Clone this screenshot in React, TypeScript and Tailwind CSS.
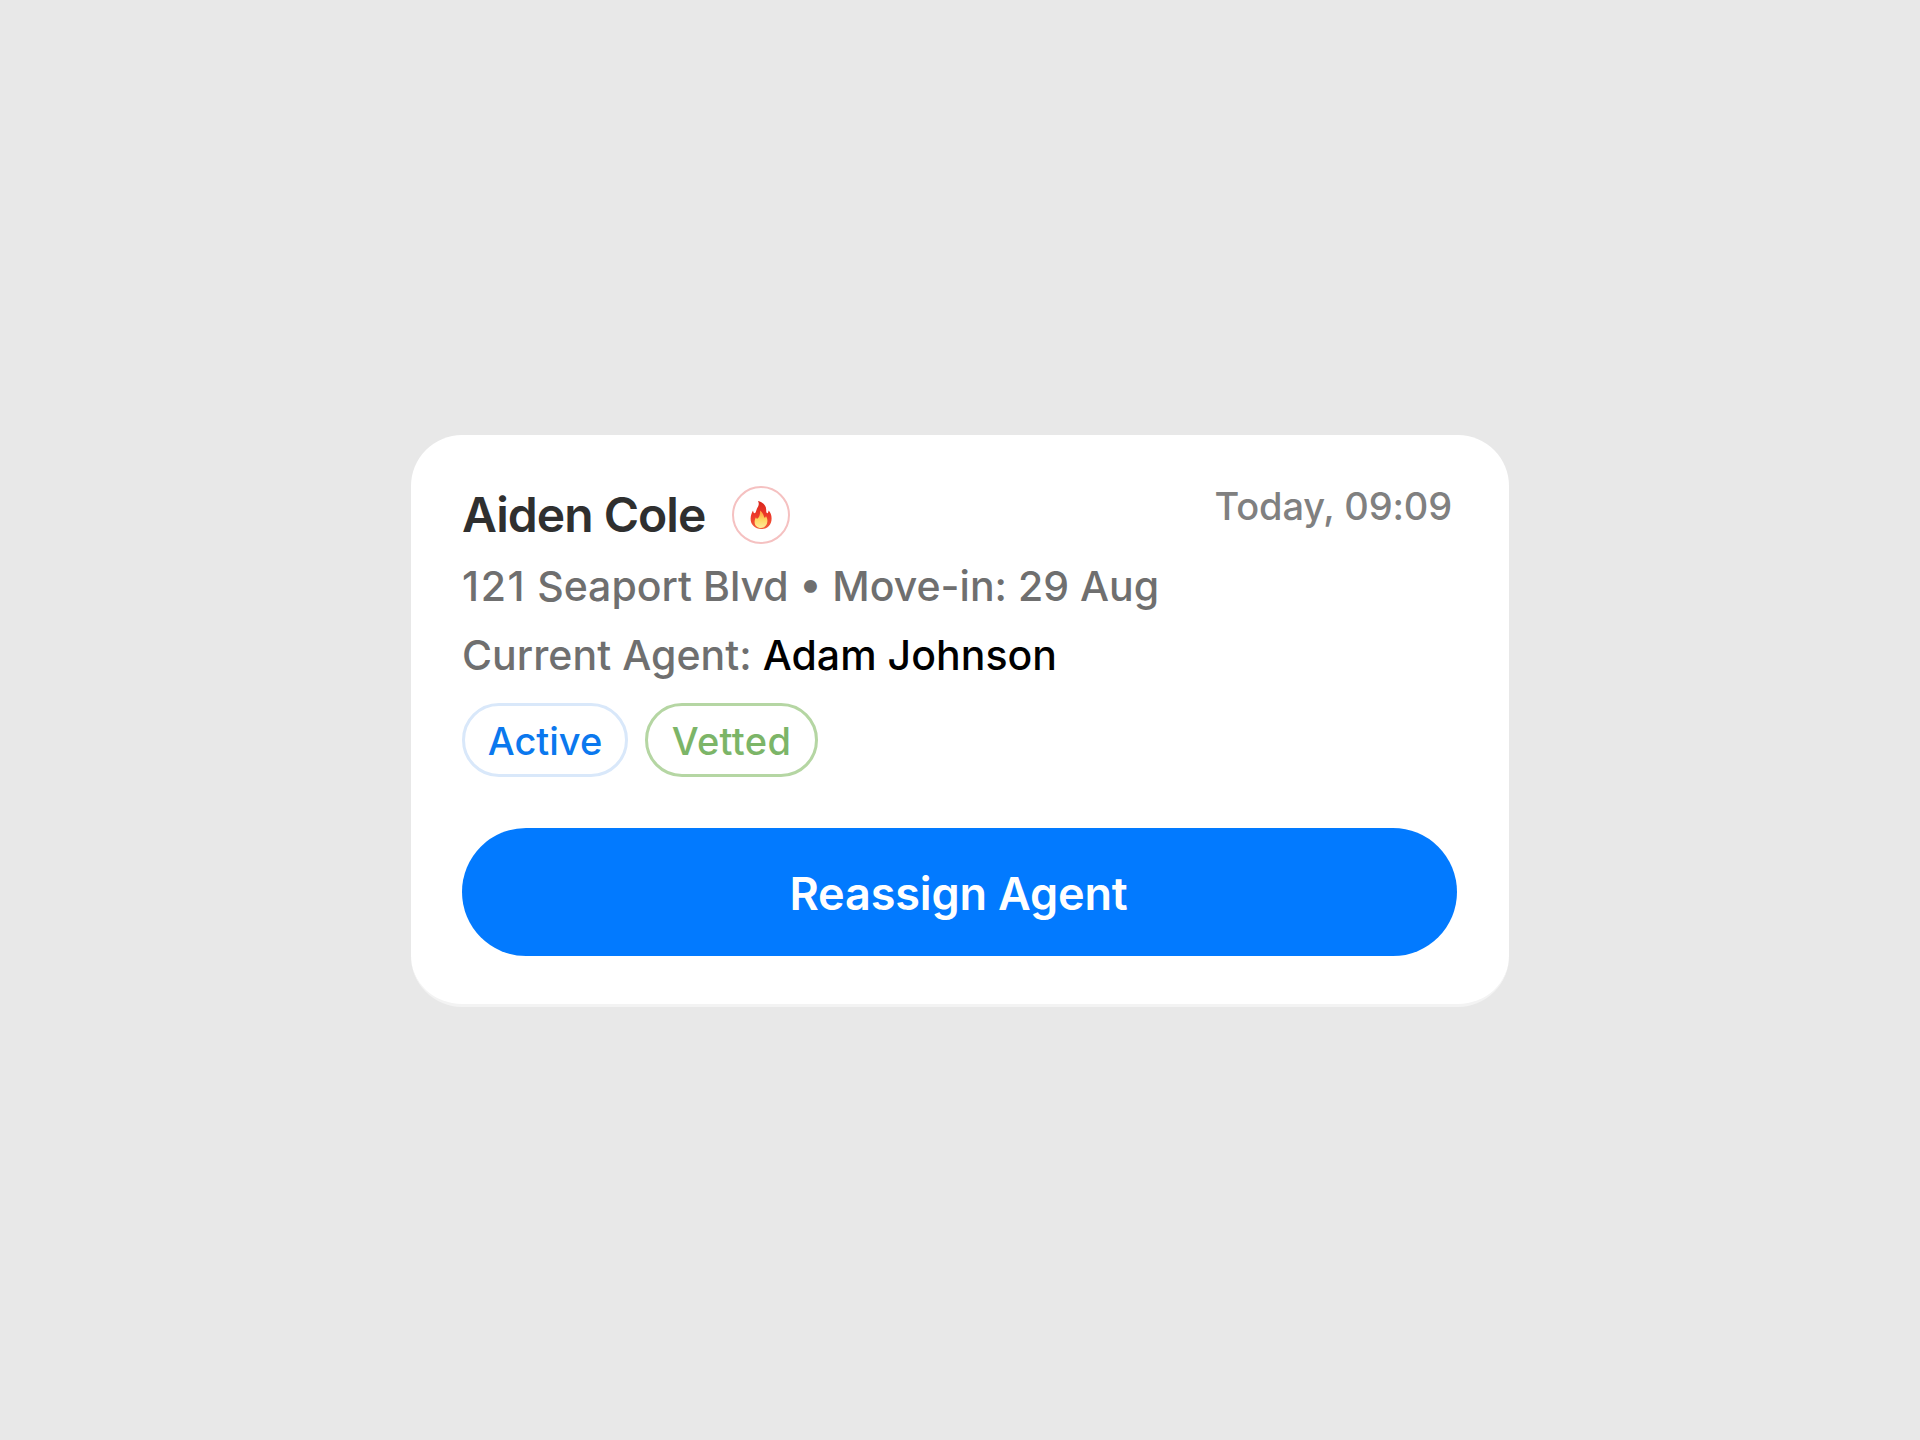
function FlameIcon() {
  return (
    <svg width="22" height="28" viewBox="0 0 22 28" fill="none">
      <defs>
        <linearGradient id="flameOuter" x1="11" y1="0" x2="11" y2="28" gradientUnits="userSpaceOnUse">
          <stop offset="0" stopColor="#d9261c" />
          <stop offset="0.55" stopColor="#ee3b2b" />
          <stop offset="1" stopColor="#f2603a" />
        </linearGradient>
        <linearGradient id="flameInner" x1="11" y1="10" x2="11" y2="27" gradientUnits="userSpaceOnUse">
          <stop offset="0" stopColor="#ff9b3a" />
          <stop offset="0.5" stopColor="#ffd662" />
          <stop offset="1" stopColor="#ffeb9a" />
        </linearGradient>
      </defs>
      <path
        d="M8 0C13 1 16.2 4.6 16.2 8.800C16.200 10.400 16.200 12.200 17.200 12.200C18.200 12.200 18.500 11 18.500 9.600C20.600 11.400 21.600 14.400 21.600 17.400C21.600 23.800 17.200 28 11.200 28C5 28 0.600 23.800 0.600 17.800C0.600 14.200 1.800 11.600 3 9.400C3.300 11 3.700 12.200 4.600 12.200C6 12.200 5.900 9.800 7 7.600C8.400 5 9.600 3 8 0Z"
        fill="url(#flameOuter)"
      />
      <path
        d="M10 9.400C13.200 11.400 13.600 14.800 14.200 16.200C14.900 17.200 15.600 16.400 15.900 15C17.100 16.800 17.500 18.800 17.400 20.600C17.100 24.600 14.400 27 11 27C7.200 27 4.600 24.600 4.600 21C4.600 19.200 5.200 17.400 6 16.200C6.300 17.400 6.900 18 7.600 17.600C9.200 16.600 10.400 13.200 10 9.400Z"
        fill="url(#flameInner)"
      />
    </svg>
  );
}

const tags = [
  { label: "Active", className: "w-[166px] border-[#d9e8fa] text-[#0b78ee]" },
  { label: "Vetted", className: "w-[173px] border-[#b5d6a3] text-[#7cb568] tracking-[0.01em]" },
];

export default function App() {
  return (
    <main className="flex h-screen w-full items-center justify-center overflow-hidden bg-[#e8e8e8] font-['Inter',sans-serif]">
      <section className="mt-[2px] flex h-[572px] w-[1098px] flex-col rounded-[51px] border-b-[3px] border-[#f3f3f3] bg-white pt-[51px] pr-[52px] pl-[51px]">
        <header className="flex items-start justify-between">
          <div className="flex h-[58px] items-center">
            <h1 className="w-[270px] text-[48px] leading-[58px] font-semibold tracking-[-0.02em] whitespace-nowrap text-[#2f2f2f]">
              Aiden Cole
            </h1>
            <span className="flex size-[58px] items-center justify-center rounded-full border-2 border-[#f5c1c1]">
              <FlameIcon />
            </span>
          </div>
          <time className="mr-[5px] text-[38px] leading-[40px] font-medium tracking-[-0.004em] whitespace-nowrap text-[#808080]">
            Today, 09:09
          </time>
        </header>

        <p className="mt-[8px] text-[41px] leading-[69px] font-medium whitespace-nowrap text-[#6f6f6f]">
          <span className="tracking-[0.04em]">121</span> Seaport Blvd • Move-in: 29 Aug
        </p>
        <p className="text-[41px] leading-[69px] font-medium tracking-[0.001em] whitespace-nowrap text-[#6f6f6f]">
          Current Agent: <span className="text-black">Adam Johnson</span>
        </p>

        <div className="mt-[13px] flex gap-[17px]">
          {tags.map((tag) => (
            <span
              key={tag.label}
              className={`flex h-[74px] items-center justify-center rounded-full border-[3px] pt-[2px] text-[38px] font-medium ${tag.className}`}
            >
              {tag.label}
            </span>
          ))}
        </div>

        <button className="mt-[51px] h-[128px] w-full rounded-full bg-[#027aff] pt-[4px] pr-[2px] text-[45px] font-semibold tracking-[-0.003em] text-white">
          Reassign Agent
        </button>
      </section>
    </main>
  );
}
